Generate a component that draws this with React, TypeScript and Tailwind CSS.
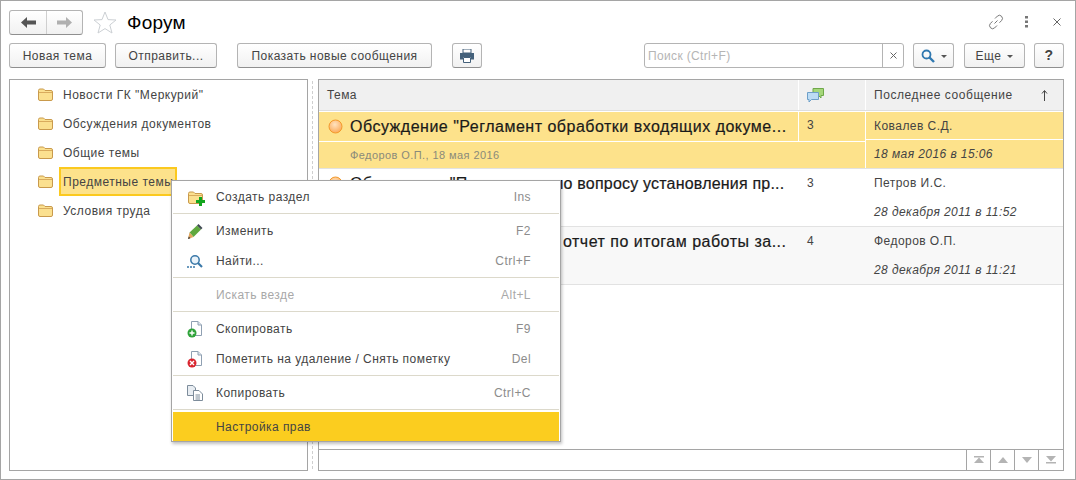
import type { ReactNode } from "react";

const btn =
  "flex items-center justify-center h-[25px] rounded-[3px] border border-[#b4b4b4] border-b-[#8f8f8f] bg-linear-to-b from-white to-[#f1f1f1] text-[12px] tracking-[0.45px] text-[#444]";

function Folder({ className = "" }: { className?: string }) {
  return (
    <svg width="15" height="13" viewBox="0 0 15 13" className={className}>
      <path d="M.5 2.5 Q.5 1 2 1 H5.5 L7 2.5 H13 Q14.5 2.5 14.5 4 V11 Q14.5 12.5 13 12.5 H2 Q.5 12.5 .5 11 Z" fill="#fbe08f" stroke="#c99a4c" />
      <path d="M1 4.5 H14" stroke="#d9ab5d" />
    </svg>
  );
}

function Caret() {
  return <span className="ml-[6px] mt-[2px] h-0 w-0 border-x-[3px] border-t-[3px] border-x-transparent border-t-[#555]" />;
}

function Doc({ badge }: { badge?: ReactNode }) {
  return (
    <svg width="17" height="17" viewBox="0 0 17 17">
      <path d="M4.5 .5 H11 L14.5 4 V14.5 H4.5 Z" fill="#fff" stroke="#8fa0b2" />
      <path d="M11 .5 V4 H14.5" fill="#dfe6ee" stroke="#8fa0b2" />
      {badge}
    </svg>
  );
}

const menuIcons: Record<string, ReactNode> = {
  create: (
    <div className="relative">
      <Folder />
      <svg width="9" height="9" viewBox="0 0 9 9" className="absolute -bottom-[2px] -right-[2px]">
        <path d="M3 0 H6 V3 H9 V6 H6 V9 H3 V6 H0 V3 H3 Z" fill="#12a51e" />
      </svg>
    </div>
  ),
  edit: (
    <svg width="15" height="15" viewBox="0 0 15 15">
      <path d="M1.5 8.5 L9 1.5 L13 5.5 L5.5 13 Z" fill="#5fa83e" />
      <path d="M9 1.5 L10.5 0 L14.5 4 L13 5.5 Z" fill="#3f4a52" />
      <path d="M1.5 8.5 L5.5 13 L0 15 Z" fill="#e0a45c" />
      <path d="M0 15 L.8 12.6 L2.4 14.2 Z" fill="#333" />
    </svg>
  ),
  find: (
    <svg width="16" height="15" viewBox="0 0 16 15">
      <circle cx="8" cy="6" r="4.2" fill="#eaf3fa" stroke="#3a78a8" strokeWidth="1.5" />
      <path d="M11 9 L15 13" stroke="#3a78a8" strokeWidth="2.2" />
      <path d="M0 13 H2 M3 13 H5 M6 13 H8" stroke="#3a78a8" strokeWidth="1.6" />
    </svg>
  ),
  copyItem: (
    <Doc
      badge={
        <>
          <circle cx="5" cy="12" r="4.5" fill="#2fa33a" />
          <path d="M5 9.5 V14.5 M2.5 12 H7.5" stroke="#fff" strokeWidth="1.4" />
        </>
      }
    />
  ),
  remove: (
    <Doc
      badge={
        <>
          <circle cx="5" cy="12" r="4.5" fill="#d9252f" />
          <path d="M3 10 L7 14 M7 10 L3 14" stroke="#fff" strokeWidth="1.4" />
        </>
      }
    />
  ),
  copy: (
    <svg width="16" height="16" viewBox="0 0 16 16">
      <path d="M.5 .5 H6 L8.5 3 V10.5 H.5 Z" fill="#e8edf2" stroke="#7d8c9b" />
      <path d="M6.5 5.5 H12 L15.5 9 V15.5 H6.5 Z" fill="#fff" stroke="#7d8c9b" />
      <path d="M8.5 10 H13 M8.5 12 H13 M8.5 14 H13" stroke="#7d8c9b" />
    </svg>
  ),
};

type MenuEntry = { label: string; key?: string; icon?: string; disabled?: boolean; active?: boolean } | "sep";

const menu: MenuEntry[] = [
  { label: "Создать раздел", key: "Ins", icon: "create" },
  "sep",
  { label: "Изменить", key: "F2", icon: "edit" },
  { label: "Найти...", key: "Ctrl+F", icon: "find" },
  "sep",
  { label: "Искать везде", key: "Alt+L", disabled: true },
  "sep",
  { label: "Скопировать", key: "F9", icon: "copyItem" },
  { label: "Пометить на удаление / Снять пометку", key: "Del", icon: "remove" },
  "sep",
  { label: "Копировать", key: "Ctrl+C", icon: "copy" },
  "sep",
  { label: "Настройка прав", active: true },
];

const folders = ['Новости ГК "Меркурий"', "Обсуждения документов", "Общие темы", "Предметные темы", "Условия труда"];

const rows = [
  {
    title: 'Обсуждение "Регламент обработки входящих докуме...',
    sub: "Федоров О.П., 18 мая 2016",
    count: "3",
    who: "Ковалев С.Д.",
    date: "18 мая 2016 в 15:06",
    bg: "bg-[#fde28b]",
    height: "h-[57px]",
    line: "border-white",
    countPad: "pt-[4px]",
    tracking: "tracking-[0.5px]",
  },
  {
    title: 'Обсуждение "Положениях по вопросу установления пр...',
    sub: "",
    count: "3",
    who: "Петров И.С.",
    date: "28 декабря 2011 в 11:52",
    bg: "bg-white",
    height: "h-[58px]",
    line: "border-transparent",
    countPad: "pt-[5px]",
    tracking: "tracking-[0.2px]",
  },
  {
    title: 'Обсуждение "Финансовый отчет по итогам работы за...',
    sub: "",
    count: "4",
    who: "Федоров О.П.",
    date: "28 декабря 2011 в 11:21",
    bg: "bg-[#f8f8f8]",
    height: "h-[58px]",
    line: "border-transparent",
    countPad: "pt-[5px]",
    tracking: "tracking-[0.5px]",
  },
];

function PageButton({ d, last }: { d: string; last?: boolean }) {
  return (
    <div className={`flex h-[20px] w-[24px] items-center justify-center border-[#a5a5a5] ${last ? "" : "border-r"}`}>
      <svg width="12" height="8" viewBox="0 0 12 8">
        <path d={d} fill="#b4b4b4" />
      </svg>
    </div>
  );
}

export default function App() {
  return (
    <div className="relative h-[480px] w-[1076px] overflow-hidden border border-[#a5a5a5] bg-white font-['Liberation_Sans',sans-serif] text-[12px] text-[#444]">
      <div className="flex h-[42px] items-center pl-2 pr-[14px]">
        <div className="flex h-[25px] w-[74px] rounded-[3px] border border-[#b4b4b4] border-b-[#8f8f8f] bg-linear-to-b from-white to-[#f1f1f1]">
          <div className="flex w-[37px] items-center justify-center border-r border-[#cfcfcf]">
            <svg width="15" height="11" viewBox="0 0 15 11">
              <path d="M0 5.5 L6 0 V3.5 H15 V7.5 H6 V11 Z" fill="#555" />
            </svg>
          </div>
          <div className="flex flex-1 items-center justify-center">
            <svg width="15" height="11" viewBox="0 0 15 11">
              <path d="M15 5.5 L9 0 V3.5 H0 V7.5 H9 V11 Z" fill="#b0b0b0" />
            </svg>
          </div>
        </div>
        <svg width="24" height="23" viewBox="0 0 24 23" className="ml-[10px]">
          <path d="M12 1 L15 8.6 L23 9 L16.8 14 L19 22 L12 17.6 L5 22 L7.2 14 L1 9 L9 8.6 Z" fill="#fff" stroke="#ccd0d4" />
        </svg>
        <span className="ml-[10px] text-[19px] leading-none tracking-[0.2px] text-black">Форум</span>
        <div className="ml-auto flex items-center">
          <svg width="16" height="16" viewBox="0 0 16 16" fill="none" stroke="#777" strokeWidth="1">
            <path d="M6.5 9.5 L9.5 6.5 M7 4.5 L9.5 2 Q11.5 .3 13.5 2.2 Q15.5 4.5 13.7 6.4 L11.5 8.7 M9 11.5 L6.5 14 Q4.5 15.7 2.5 13.8 Q.5 11.5 2.3 9.6 L4.5 7.3" />
          </svg>
          <svg width="4" height="12" viewBox="0 0 4 12" className="ml-[21px]">
            <path d="M0 0 H3 V2.5 H0 Z M0 4.5 H3 V7 H0 Z M0 9 H3 V11.5 H0 Z" fill="#777" />
          </svg>
          <svg width="8" height="8" viewBox="0 0 8 8" className="ml-[24px]">
            <path d="M.5 .5 L7.5 7.5 M7.5 .5 L.5 7.5" stroke="#666" />
          </svg>
        </div>
      </div>

      <div className="flex h-[36px] items-start pl-2 pr-[10px]">
        <div className={`${btn} w-[97px]`}>Новая тема</div>
        <div className={`${btn} ml-[9px] w-[102px]`}>Отправить...</div>
        <div className={`${btn} ml-[20px] w-[195px]`}>Показать новые сообщения</div>
        <div className={`${btn} ml-[20px] w-[30px]`}>
          <svg width="14" height="14" viewBox="0 0 14 14">
            <path d="M3 0 H11 V4 H3 Z" fill="#fff" stroke="#44617b" />
            <path d="M0 4 H14 V10.5 H11 V8 H3 V10.5 H0 Z" fill="#44617b" />
            <path d="M3.5 8.5 H10.5 V13.5 H3.5 Z" fill="#fff" stroke="#44617b" />
          </svg>
        </div>
        <div className="ml-[162px] flex h-[25px] w-[260px] rounded-[3px] border border-[#b4b4b4]">
          <div className="flex flex-1 items-center border-r border-[#b4b4b4] pl-[3px] tracking-[0.35px] text-[#b5b5b5]">Поиск (Ctrl+F)</div>
          <div className="flex w-[20px] items-center justify-center">
            <svg width="7" height="7" viewBox="0 0 7 7">
              <path d="M.5 .5 L6.5 6.5 M6.5 .5 L.5 6.5" stroke="#666" />
            </svg>
          </div>
        </div>
        <div className={`${btn} ml-[9px] w-[41px]`}>
          <svg width="14" height="14" viewBox="0 0 14 14">
            <circle cx="5.5" cy="5.5" r="4" fill="none" stroke="#2f78b0" strokeWidth="1.8" />
            <path d="M8.5 8.5 L13 13" stroke="#2f78b0" strokeWidth="2.4" />
          </svg>
          <Caret />
        </div>
        <div className={`${btn} ml-[10px] w-[61px]`}>
          Еще
          <Caret />
        </div>
        <div className={`${btn} ml-[9px] w-[30px] text-[14px] font-bold text-[#222]`}>?</div>
      </div>

      <div className="flex h-[392px] pl-2">
        <div className="w-[299px] border border-[#a5a5a5]">
          {folders.map((name, i) => (
            <div key={name} className="flex h-[29px] items-center pl-[28px]">
              <Folder />
              <span
                className={`ml-[6px] flex h-[29px] items-center tracking-[0.5px] ${
                  i === 3 ? "w-[118px] border-2 border-[#fbc91f] bg-[#fde28b] pl-[2px]" : "pl-[4px]"
                }`}
              >
                {name}
              </span>
            </div>
          ))}
        </div>
        <div className="mx-[4px] my-[2px] w-[1px] border-l border-dashed border-[#cfcfcf]" />
        <div className="ml-[1px] flex w-[746px] flex-col border border-[#a5a5a5]">
          <div className="flex h-[30px] gap-[1px] bg-white">
            <div className="flex w-[479px] items-center bg-[#f0f0f0] pl-[8px] tracking-[0.4px]">Тема</div>
            <div className="flex w-[66px] items-center bg-[#f0f0f0] pl-[8px]">
              <svg width="17" height="15" viewBox="0 0 17 15">
                <path d="M6 .5 H16.5 V7.5 H14 V10 L11.5 7.5 H6 Z" fill="#a5d77a" stroke="#6fa84a" />
                <path d="M.5 4.5 H11.5 V11.5 H4.5 L2 14 V11.5 H.5 Z" fill="#bcdcf5" stroke="#6d9fc8" />
              </svg>
            </div>
            <div className="flex flex-1 items-center justify-between bg-[#f0f0f0] pl-[8px] pr-[15px] tracking-[0.58px]">
              Последнее сообщение
              <svg width="7" height="11" viewBox="0 0 7 11">
                <path d="M3.5 11 V1 M1 3.5 L3.5 .5 L6 3.5" fill="none" stroke="#444" />
              </svg>
            </div>
          </div>
          <div className="h-[2px] border-t border-[#dedede]" />
          {rows.map((r) => (
            <div key={r.who + r.date} className={`flex border-b border-[#e2e2e2] ${r.height} ${r.bg}`}>
              <div className="flex w-[546px] flex-col">
                <div className={`flex h-[30px] border-b ${r.line}`}>
                  <div className={`flex w-[480px] items-center border-r pl-[9px] ${r.line}`}>
                    <svg width="15" height="15" viewBox="0 0 15 15" className="shrink-0">
                      <defs>
                        <radialGradient id="dot" cx="45%" cy="35%" r="70%">
                          <stop offset="0%" stopColor="#ffe3c0" />
                          <stop offset="100%" stopColor="#fba651" />
                        </radialGradient>
                      </defs>
                      <circle cx="7.5" cy="7.5" r="6.5" fill="url(#dot)" stroke="#f39a2c" />
                    </svg>
                    <span className={`ml-[7px] whitespace-nowrap text-[16px] text-[#1a1a1a] [-webkit-text-stroke:0.2px_#1a1a1a] ${r.tracking}`}>{r.title}</span>
                  </div>
                  <div className={`flex-1 pl-[8px] tracking-[0.4px] ${r.countPad}`}>{r.count}</div>
                </div>
                <div className="flex flex-1 items-center pl-[31px] text-[11px] tracking-[0.42px] text-[#8a8a7a]">{r.sub}</div>
              </div>
              <div className={`flex flex-1 flex-col border-l ${r.line}`}>
                <div className={`flex h-[28px] items-center border-b pl-[8px] tracking-[0.45px] ${r.line}`}>{r.who}</div>
                <div className="flex flex-1 items-center pl-[8px] italic tracking-[0.42px]">{r.date}</div>
              </div>
            </div>
          ))}
          <div className="flex-1" />
          <div className="flex justify-end border-t border-[#a5a5a5]">
            <div className="flex border-l border-[#a5a5a5]">
              <PageButton d="M1 0 H11 V1.5 H1 Z M6 1.5 L11 7 H1 Z" />
              <PageButton d="M6 1 L11 7 H1 Z" />
              <PageButton d="M1 1 H11 L6 7 Z" />
              <PageButton d="M1 0 H11 L6 5.5 Z M1 6 H11 V7.5 H1 Z" last />
            </div>
          </div>
        </div>
      </div>

      <div className="absolute left-[170px] top-[179px] w-[390px] border border-[#a5a5a5] bg-white px-[1px] pt-[1px] shadow-[1px_2px_3px_rgba(0,0,0,0.25)]">
        {menu.map((m, i) =>
          m === "sep" ? (
            <div key={i} className="flex h-[4px] items-start pt-[1px]">
              <div className="h-[1px] w-full bg-[#dcd9cb]" />
            </div>
          ) : (
            <div
              key={m.label}
              className={`flex items-center tracking-[0.45px] ${m.active ? "h-[29px] bg-[#fbcd1f]" : "h-[30px]"} ${m.disabled ? "text-[#a8a8a8]" : ""}`}
            >
              <div className="flex w-[43px] shrink-0 items-center justify-center pl-[1px]">{m.icon && menuIcons[m.icon]}</div>
              <span>{m.label}</span>
              {m.key && <span className={`ml-auto pr-[28px] ${m.disabled ? "" : "text-[#8c8c8c]"}`}>{m.key}</span>}
            </div>
          ),
        )}
      </div>
    </div>
  );
}
